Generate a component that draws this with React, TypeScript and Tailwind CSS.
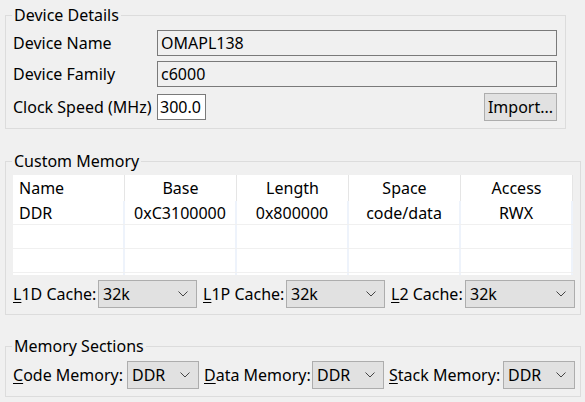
import React from "react";

const font = { fontFamily: '"Noto Sans", "Liberation Sans", sans-serif' };

function Chevron() {
  return (
    <svg width="10" height="6" viewBox="0 0 10 6" className="shrink-0">
      <path d="M0.5 0.5 L5 5 L9.5 0.5" fill="none" stroke="#444" strokeWidth="1" />
    </svg>
  );
}

function Combo({ value, w }: { value: string; w: string }) {
  return (
    <div className={`${w} h-[28px] flex items-center justify-between bg-[#e1e1e1] border border-[#adadad] pl-[4px] pr-[8px] shrink-0`}>
      <span>{value}</span>
      <Chevron />
    </div>
  );
}

function Legend({ children }: { children: React.ReactNode }) {
  return <legend className="ml-[6px] px-[2px] h-[20px] leading-[20px]">{children}</legend>;
}

const cols = ["Name", "Base", "Length", "Space", "Access"];
const rows = [
  ["DDR", "0xC3100000", "0x800000", "code/data", "RWX"],
  ["", "", "", "", ""],
  ["", "", "", "", ""],
  ["", "", "", "", ""],
];

export default function App() {
  return (
    <div className="w-[585px] h-[402px] bg-[#f0f0f0] text-[16px] text-black overflow-hidden pt-[5px]" style={font}>
      <fieldset className="ml-[5px] w-[561px] h-[124px] border border-[#dcdcdc] p-0">
        <Legend>Device Details</Legend>
        <div className="flex flex-col pl-[7px] pt-[5px]">
          <div className="flex items-center h-[26px]">
            <span className="w-[144px] whitespace-nowrap">Device Name</span>
            <div className="w-[400px] h-[26px] border border-[#7a7a7a] bg-[#f0f0f0] px-[3px] flex items-center">OMAPL138</div>
          </div>
          <div className="flex items-center h-[26px] mt-[5px]">
            <span className="w-[144px] whitespace-nowrap">Device Family</span>
            <div className="w-[400px] h-[26px] border border-[#7a7a7a] bg-[#f0f0f0] px-[3px] flex items-center">c6000</div>
          </div>
          <div className="flex items-center h-[28px] mt-[6px] w-[544px]">
            <span className="w-[144px] whitespace-nowrap">Clock Speed (MHz)</span>
            <div className="w-[49px] h-[26px] border border-[#7a7a7a] bg-white px-[2px] flex items-center">300.0</div>
            <div className="ml-auto w-[73px] h-[28px] border border-[#adadad] bg-[#e1e1e1] flex items-center justify-center">Import...</div>
          </div>
        </div>
      </fieldset>

      <fieldset className="ml-[5px] mt-[22px] w-[576px] h-[164px] border border-[#dcdcdc] p-0">
        <Legend>Custom Memory</Legend>
        <div className="pl-[7px] pt-[4px]">
          <div className="w-[560px] h-[100px] bg-[#f0f0f0] overflow-hidden">
            <div className="flex h-[26px] bg-white">
              {cols.map((c, i) => (
                <div
                  key={c}
                  className={`w-[112px] h-[26px] border-r border-[#e5e5e5] flex items-center ${i === 0 ? "justify-start pl-[6px]" : "justify-center"}`}
                >
                  {c}
                </div>
              ))}
            </div>
            {rows.map((r, ri) => (
              <div key={ri} className="flex h-[24px] bg-white border-b border-[#f0f0f0]">
                {r.map((v, i) => (
                  <div
                    key={i}
                    className={`w-[112px] h-[23px] border-r-2 border-[#eef3fb] flex items-center ${i === 0 ? "justify-start pl-[6px]" : "justify-center"}`}
                  >
                    {v}
                  </div>
                ))}
              </div>
            ))}
          </div>
          <div className="flex items-center mt-[5px] h-[28px] whitespace-nowrap">
            <span className="w-[85px]"><u className="underline-offset-2">L</u>1D Cache:</span>
            <Combo value="32k" w="w-[99px]" />
            <span className="ml-[6px] w-[83px]"><u className="underline-offset-2">L</u>1P Cache:</span>
            <Combo value="32k" w="w-[99px]" />
            <span className="ml-[6px] w-[74px]"><u className="underline-offset-2">L</u>2 Cache:</span>
            <Combo value="32k" w="w-[110px]" />
          </div>
        </div>
      </fieldset>

      <fieldset className="ml-[5px] mt-[21px] w-[576px] h-[61px] border border-[#dcdcdc] p-0">
        <Legend>Memory Sections</Legend>
        <div className="flex items-center h-[28px] pl-[7px] mt-[5px] whitespace-nowrap">
          <span className="w-[114px]"><u className="underline-offset-2">C</u>ode Memory:</span>
          <Combo value="DDR" w="w-[72px]" />
          <span className="ml-[5px] w-[108px]"><u className="underline-offset-2">D</u>ata Memory:</span>
          <Combo value="DDR" w="w-[72px]" />
          <span className="ml-[5px] w-[114px]"><u className="underline-offset-2">S</u>tack Memory:</span>
          <Combo value="DDR" w="w-[72px]" />
        </div>
      </fieldset>
    </div>
  );
}
